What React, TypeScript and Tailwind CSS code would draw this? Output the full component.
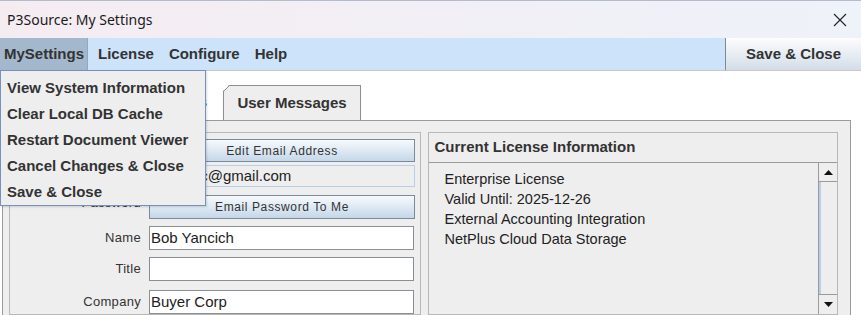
import React from 'react';

const menuItems = [
  'View System Information',
  'Clear Local DB Cache',
  'Restart Document Viewer',
  'Cancel Changes & Close',
  'Save & Close',
];

const licenseLines = [
  'Enterprise License',
  'Valid Until: 2025-12-26',
  'External Accounting Integration',
  'NetPlus Cloud Data Storage',
];

const JButton = ({ label, className = '' }: { label: string; className?: string }) => (
  <div
    className={`flex items-center justify-center border border-[#7a8a99] bg-gradient-to-b from-[#f7fafd] to-[#c5d7e9] text-[12px] tracking-[0.6px] text-[#333] ${className}`}
  >
    {label}
  </div>
);

// text field; bg and border passed in so classes don't fight
const JField = ({ value = '', className = '' }: { value?: string; className?: string }) => (
  <div
    className={`flex items-center overflow-hidden whitespace-nowrap border pl-[1px] text-[15px] text-[#222] ${className}`}
  >
    {value}
  </div>
);

const Label = ({ text }: { text: string }) => (
  <div className='flex items-center justify-end text-[13px] tracking-[0.3px] text-[#333]'>
    {text}
  </div>
);

const Arrow = ({ up }: { up?: boolean }) => (
  <svg width='9' height='5' viewBox='0 0 9 5'>
    <polygon points={up ? '4.5,0 9,5 0,5' : '0,0 9,0 4.5,5'} fill='#111' />
  </svg>
);

const App = () => {
  return (
    <div className="relative flex h-[315px] w-[861px] flex-col overflow-hidden bg-white font-['Liberation_Sans',Arial,sans-serif]">
      {/* Title bar */}
      <div className='flex h-[38px] shrink-0 items-center justify-between border-t border-[#b4bccb] bg-gradient-to-r from-[#f5ecf2] to-[#eef2f9] pl-[7px] pr-[13px]'>
        <span className="font-['Noto_Sans',sans-serif] text-[14px] text-[#1b1b1b]">
          P3Source: My Settings
        </span>
        <svg width='16' height='16' viewBox='0 0 16 16'>
          <path d='M2 2 L14 14 M14 2 L2 14' stroke='#222' strokeWidth='1.1' />
        </svg>
      </div>

      {/* Menu bar */}
      <div className='flex h-[33px] shrink-0 border-b border-[#c8c8c8] bg-[#cce3fa] text-[15px] font-bold text-[#333]'>
        <div className='flex flex-1 items-stretch'>
          <div className='flex w-[88px] items-center border-r border-[#93a8bd] bg-[#a3b8cc] pl-[4px]'>
            MySettings
          </div>
          <div className='flex items-center gap-[15px] pl-[10px]'>
            <span>License</span>
            <span>Configure</span>
            <span>Help</span>
          </div>
        </div>
        <div className='flex w-[136px] items-center justify-center border-l border-[#7a8a99] bg-gradient-to-b from-[#fdfdfe] to-[#d2dde8]'>
          Save &amp; Close
        </div>
      </div>

      {/* Tabs */}
      <div className='mt-[14px] flex h-[35px] shrink-0 items-stretch text-[15px] font-bold text-[#333]'>
        <div className='ml-[70px] flex w-[153px] items-center justify-end overflow-hidden whitespace-nowrap pr-[16px]'>
          Settings
        </div>
        <div
          className='flex w-[138px] items-center justify-center border-r border-[#8e8f8f] bg-[#eeeeee]'
          style={{ clipPath: 'polygon(6px 0, 100% 0, 100% 100%, 0 100%, 0 6px)' }}
        >
          <div className='relative flex h-full w-full items-center justify-center border-t border-l border-[#8e8f8f]'>
            User Messages
            <svg className='absolute -left-[1px] -top-[1px]' width='7' height='7' viewBox='0 0 7 7'>
              <path d='M0.5 6.5 L6.5 0.5' stroke='#8e8f8f' strokeWidth='1' />
            </svg>
          </div>
        </div>
      </div>

      {/* Tab content */}
      <div className='ml-[2px] mr-[10px] flex flex-1 gap-[7px] border border-[#9a9a9a] bg-[#eeeeee] pl-[6px] pr-[12px] pt-[11px]'>
        {/* Left form panel */}
        <div className='flex w-[412px] flex-col border border-[#b8b8b8] pl-[1px] pt-[6px]'>
          <div className='grid grid-cols-[130px_266px] gap-x-[8px]'>
            <div />
            <JButton label='Edit Email Address' className='h-[23px]' />

            <div />
            <JField
              value='bobyanc@gmail.com'
              className='mt-[3px] h-[22px] border-[#b8cfe5] bg-[#eeeeee]'
            />

            <Label text='Password' />
            <JButton label='Email Password To Me' className='mt-[8px] h-[24px]' />

            <div className='mt-[7px] flex justify-end'>
              <Label text='Name' />
            </div>
            <JField value='Bob Yancich' className='mt-[7px] h-[24px] w-[265px] border-[#8a8f96] bg-white' />

            <div className='mt-[7px] flex justify-end'>
              <Label text='Title' />
            </div>
            <JField className='mt-[7px] h-[24px] w-[265px] border-[#8a8f96] bg-white' />

            <div className='mt-[9px] flex justify-end'>
              <Label text='Company' />
            </div>
            <JField value='Buyer Corp' className='mt-[9px] h-[24px] w-[265px] border-[#8a8f96] bg-white' />
          </div>
        </div>

        {/* Right license panel */}
        <div className='flex w-[411px] flex-col border border-[#b8b8b8]'>
          <div className='flex h-[30px] shrink-0 items-center border-b border-[#9a9a9a] pl-[6px] text-[15px] font-bold text-[#333]'>
            Current License Information
          </div>
          <div className='flex flex-1'>
            <div className='flex-1 pl-[16px] pt-[6px] text-[14.5px] leading-[20px] text-[#222]'>
              {licenseLines.map((line) => (
                <div key={line}>{line}</div>
              ))}
            </div>
            <div className='flex w-[19px] flex-col border-l border-[#9a9a9a]'>
              <div className='flex h-[19px] items-center justify-center border-b border-[#9a9a9a] bg-[#eeeeee]'>
                <Arrow up />
              </div>
              <div className='flex-1 border-l-2 border-[#b8cfe5] bg-[#eeeeee]' />
              <div className='flex h-[20px] items-center justify-center border-t border-[#9a9a9a] bg-[#eeeeee]'>
                <Arrow />
              </div>
            </div>
          </div>
        </div>
      </div>

      {/* Open MySettings menu */}
      <div className='absolute left-0 top-[70px] w-[206px] border border-[#7890bd] bg-[#eeeeee] pt-[4px] text-[15px] font-bold text-[#333] shadow-[1px_1px_2px_rgba(0,0,0,0.15)]'>
        {menuItems.map((item) => (
          <div key={item} className='flex h-[26px] items-center whitespace-nowrap pl-[6px]'>
            {item}
          </div>
        ))}
      </div>
    </div>
  );
};

export default App;
